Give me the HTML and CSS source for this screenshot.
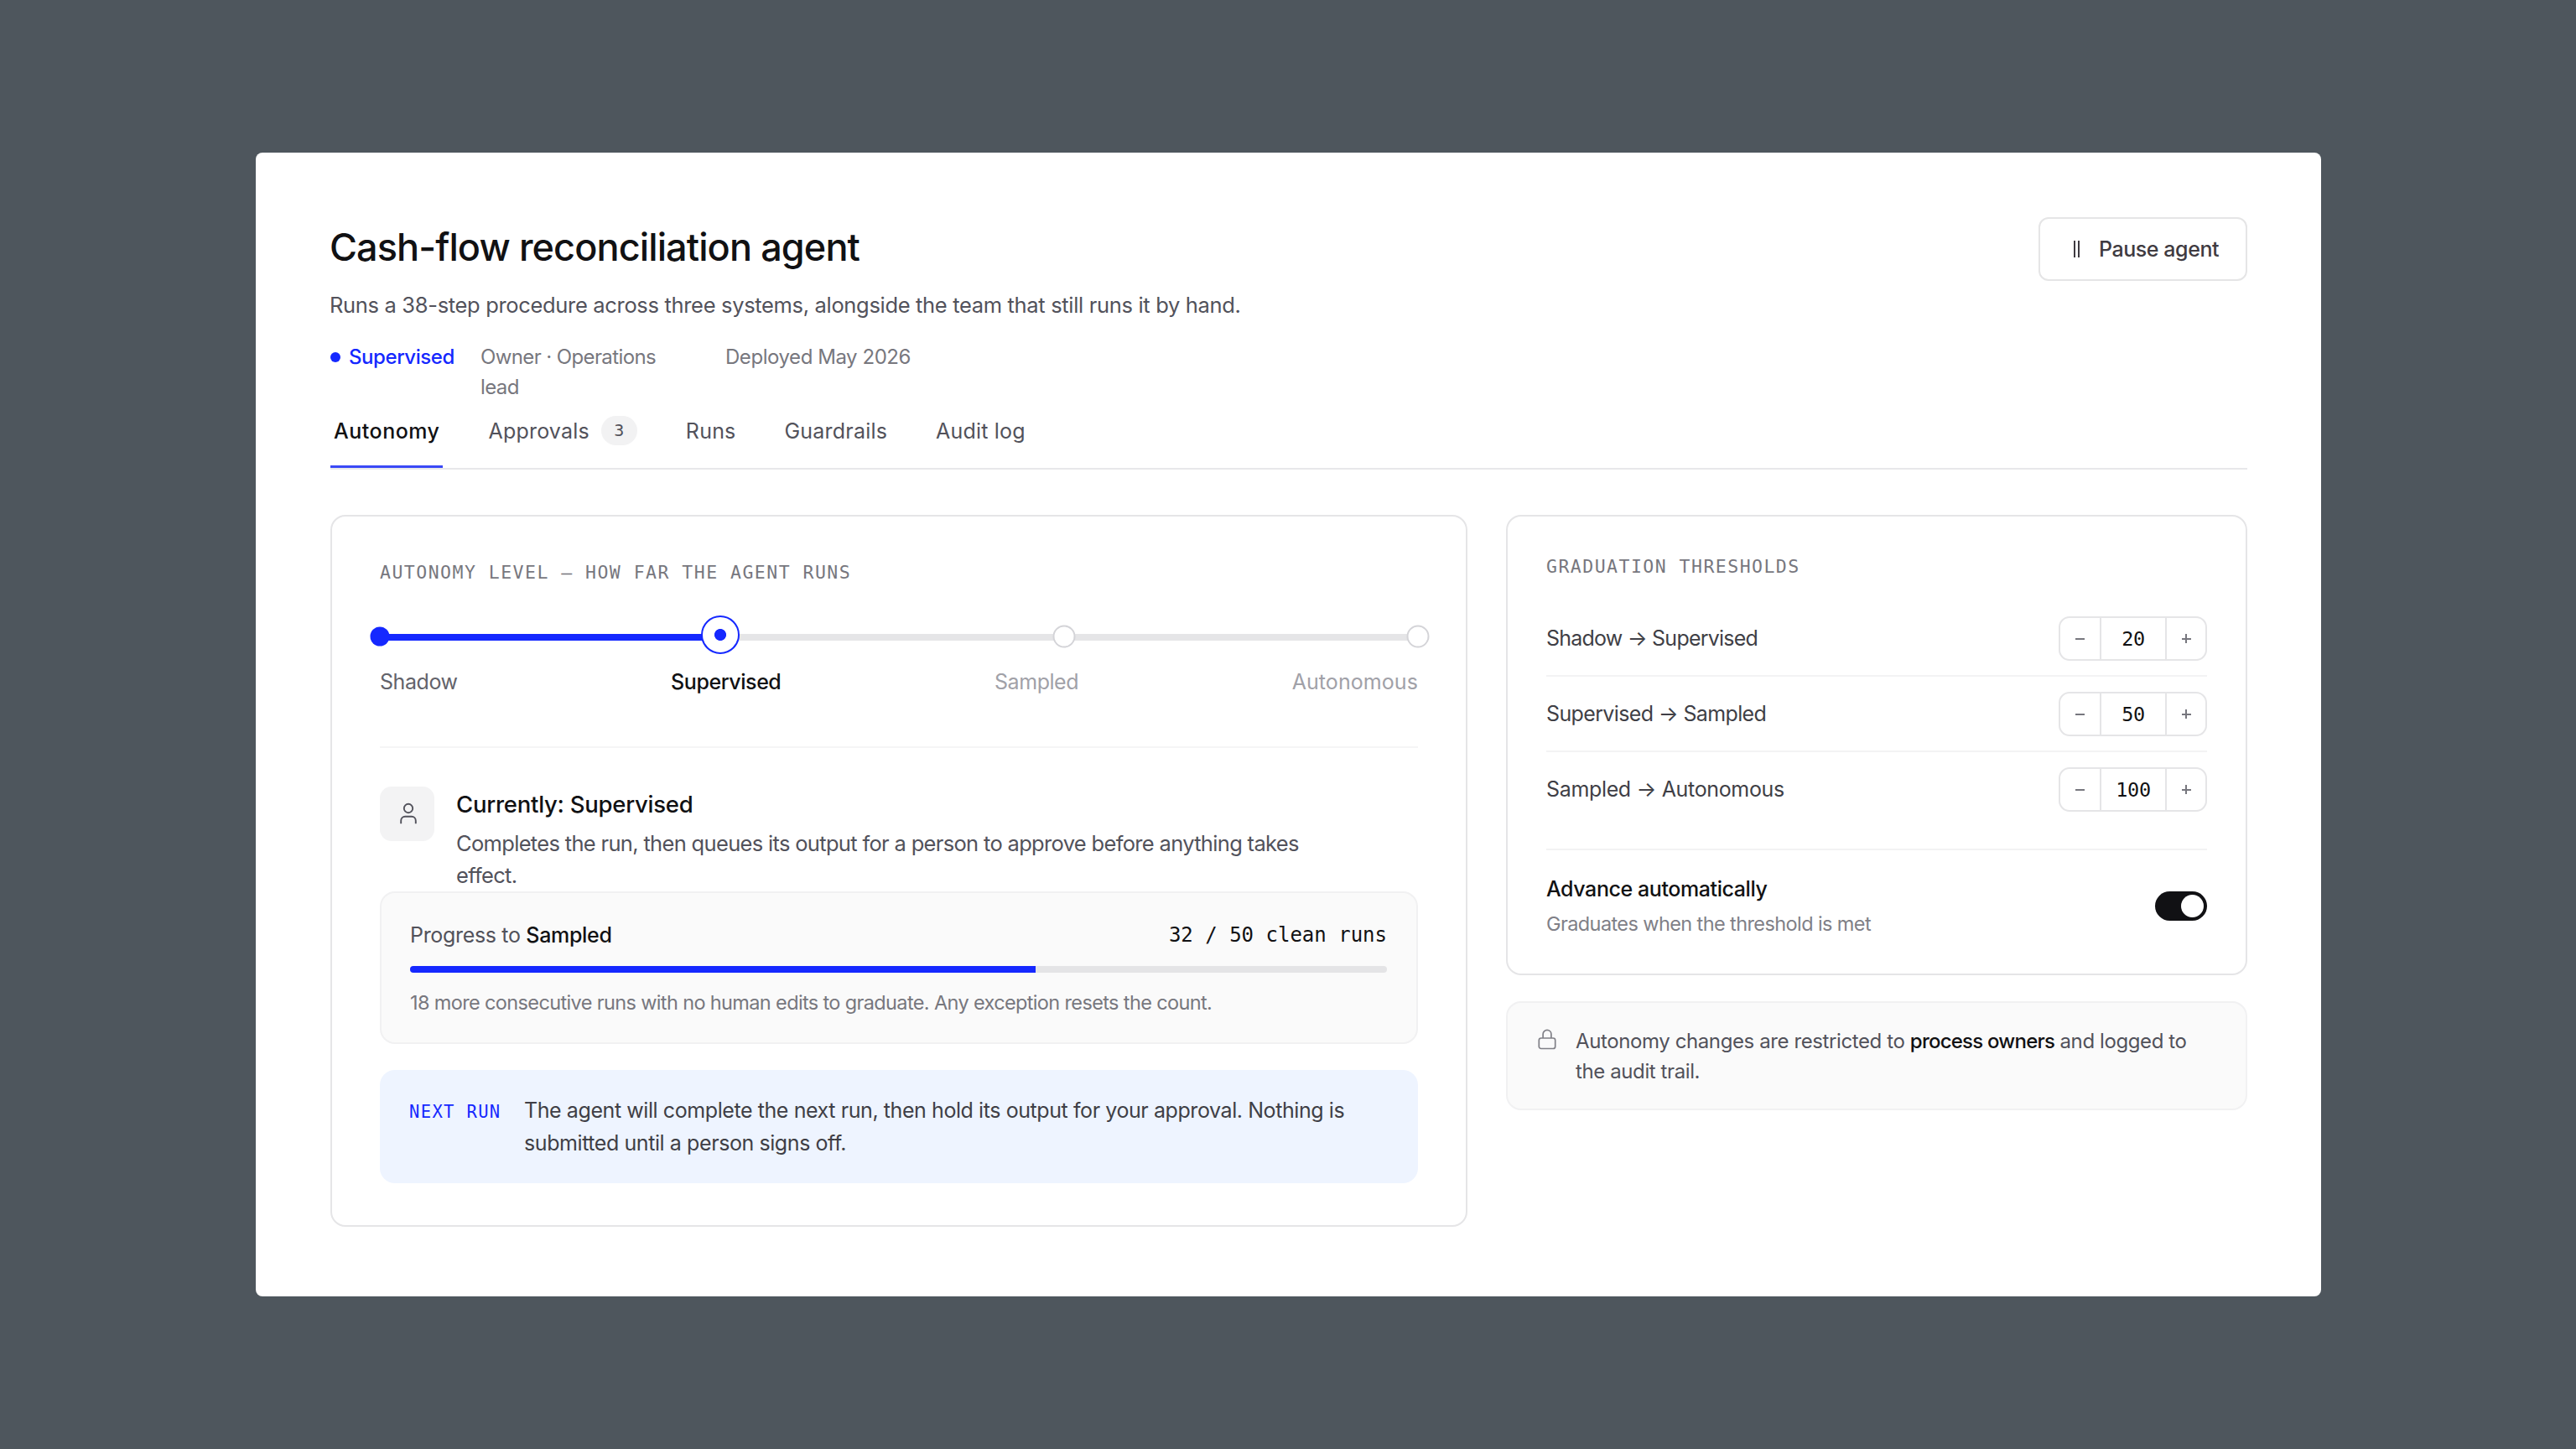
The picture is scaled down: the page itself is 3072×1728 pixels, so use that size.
FILE: index.html
```
<!DOCTYPE html>
<html lang="en">
<head>
  <meta charset="UTF-8">
  <title>Cash-flow reconciliation agent</title>
  <link rel="stylesheet" href="styles.css">
</head>
<body>

<main class="panel">
  <header class="header">
    <div>
      <h1>Cash-flow reconciliation agent</h1>
      <p class="subtitle">Runs a 38-step procedure across three systems, alongside the team that still runs it by hand.</p>
      <div class="meta">
        <span class="status">Supervised</span>
        <span class="owner">Owner · Operations lead</span>
        <span class="deployed">Deployed May 2026</span>
      </div>
    </div>
    <button type="button" class="pause">
      <svg width="8" height="20" viewBox="0 0 8 20" stroke="currentColor" stroke-width="2"><path d="M1 0v20M6 0v20"/></svg>
      Pause agent
    </button>
  </header>

  <nav class="tabs">
    <a class="tab active">Autonomy</a>
    <a class="tab">Approvals <span class="badge">3</span></a>
    <a class="tab">Runs</a>
    <a class="tab">Guardrails</a>
    <a class="tab">Audit log</a>
  </nav>

  <div class="columns">
    <section class="card level">
      <h2 class="label">AUTONOMY LEVEL — HOW FAR THE AGENT RUNS</h2>

      <div class="slider">
        <div class="track"><div class="track-fill"></div></div>
        <span class="node done"></span>
        <span class="node current"></span>
        <span class="node sampled"></span>
        <span class="node last"></span>
      </div>
      <div class="steps">
        <span class="passed">Shadow</span>
        <span class="now">Supervised</span>
        <span>Sampled</span>
        <span class="auto">Autonomous</span>
      </div>

      <div class="current-row">
        <div class="icon-box">
          <svg width="24" height="28" viewBox="0 0 24 28" fill="none" stroke="currentColor" stroke-width="1.9">
            <circle cx="12" cy="7" r="5.2"/>
            <path d="M3.2 25.3v-3.6a4.9 4.9 0 0 1 4.9-4.9h7.8a4.9 4.9 0 0 1 4.9 4.9v3.6"/>
          </svg>
        </div>
        <div>
          <h3>Currently: Supervised</h3>
          <p class="desc">Completes the run, then queues its output for a person to approve before anything takes effect.</p>
        </div>
      </div>

      <div class="progress">
        <div class="progress-head">
          <span>Progress to <b>Sampled</b></span>
          <span class="count">32 / 50 clean runs</span>
        </div>
        <div class="bar"><div class="bar-fill" style="width: 64%"></div></div>
        <p class="caption">18 more consecutive runs with no human edits to graduate. Any exception resets the count.</p>
      </div>

      <div class="next">
        <span class="next-label">NEXT RUN</span>
        <p>The agent will complete the next run, then hold its output for your approval. Nothing is submitted until a person signs off.</p>
      </div>
    </section>

    <aside>
      <section class="card thresholds">
        <h2 class="label">GRADUATION THRESHOLDS</h2>
        <div class="rows">
          <div class="row">
            <span class="tight">Shadow → Supervised</span>
            <div class="stepper"><button type="button" class="minus"></button><output>20</output><button type="button" class="plus"></button></div>
          </div>
          <div class="row">
            <span class="mid">Supervised → Sampled</span>
            <div class="stepper"><button type="button" class="minus"></button><output>50</output><button type="button" class="plus"></button></div>
          </div>
          <div class="row">
            <span>Sampled → Autonomous</span>
            <div class="stepper"><button type="button" class="minus"></button><output>100</output><button type="button" class="plus"></button></div>
          </div>
        </div>
        <div class="advance">
          <div>
            <h4>Advance automatically</h4>
            <p>Graduates when the threshold is met</p>
          </div>
          <div class="toggle"></div>
        </div>
      </section>

      <div class="note">
        <svg width="22" height="26" viewBox="0 0 22 26" fill="none" stroke="currentColor" stroke-width="1.7">
          <rect x="1.3" y="11" width="19.4" height="12.5" rx="2.5"/>
          <path d="M6.1 11V6.3a4.9 4.9 0 0 1 9.8 0V11"/>
        </svg>
        <p>Autonomy changes are restricted to <b>process owners</b> and logged to the audit trail.</p>
      </div>
    </aside>
  </div>
</main>

</body>
</html>
```

FILE: styles.css
```
* {
  box-sizing: border-box;
}

body {
  margin: 0;
  background: #4e565d;
  font-family: Inter, "Liberation Sans", sans-serif;
  font-size: 25px;
  line-height: 36px;
  color: #52525b;
}

h1, h2, h3, h4, p {
  margin: 0;
  font-weight: 500;
}

p {
  font-weight: 400;
}

b {
  font-weight: 500;
  color: #111113;
}

button {
  background: none;
  border: 0;
  padding: 0;
  font: inherit;
}

.panel {
  margin: 182px 304px 182px 305px;
  height: 1364px;
  padding: 76px 88px 0 89px;
  background: #fff;
  border-radius: 8px;
}

/* header */
.header {
  display: flex;
  justify-content: space-between;
  align-items: flex-start;
  height: 221px;
}

h1 {
  margin-left: -1px;
  font-size: 45px;
  line-height: 74px;
  letter-spacing: -0.0198em;
  color: #111113;
}

.subtitle {
  margin-top: 14px;
  margin-left: -1px;
  font-size: 25.5px;
  letter-spacing: -0.0129em;
}

.meta {
  display: flex;
  align-items: flex-start;
  gap: 32px;
  margin-top: 26px;
  font-size: 24px;
  line-height: 35.5px;
  color: #77777e;
}

.status {
  display: flex;
  align-items: center;
  gap: 10px;
  width: 147px;
  font-weight: 500;
  letter-spacing: -0.018em;
  color: #1528ff;
}

.status::before {
  content: "";
  flex: none;
  width: 12px;
  height: 12px;
  border-radius: 50%;
  background: #1528ff;
}

.owner {
  width: 240px;
  margin-right: 20px;
  letter-spacing: -0.0255em;
}

.deployed {
  letter-spacing: -0.0186em;
}

.pause {
  display: flex;
  align-items: center;
  gap: 22px;
  width: 249px;
  height: 76px;
  margin-top: 1px;
  padding-left: 40px;
  border: 2px solid #e5e5e6;
  border-radius: 12px;
  font-weight: 500;
  letter-spacing: -0.0176em;
  color: #3f3b41;
}

/* tabs */
.tabs {
  display: flex;
  gap: 50px;
  height: 81px;
  border-bottom: 2px solid #e8e8ea;
}

.tab {
  display: flex;
  align-items: center;
  padding: 0 4px 10px;
  letter-spacing: 0.008em;
}

.tab.active {
  padding-bottom: 7px;
  border-bottom: 3px solid #3a49f6;
  font-weight: 500;
  letter-spacing: 0.02em;
  color: #111113;
}

.badge {
  width: 43px;
  height: 35px;
  margin-left: 14px;
  border-radius: 18px;
  background: #f2f2f3;
  font: 20px/35px "DejaVu Sans Mono", monospace;
  letter-spacing: 0;
  text-align: center;
}

/* cards */
.columns {
  display: grid;
  grid-template-columns: 1356px 884px;
  justify-content: space-between;
  align-items: start;
  margin-top: 54px;
}

.card {
  border: 2px solid #e5e5e7;
  border-radius: 18px;
}

.label {
  font: 21.5px/30px "DejaVu Sans Mono", monospace;
  letter-spacing: 1.47px;
  color: #77777e;
}

.level {
  padding: 52px 57px 50px;
}

/* autonomy slider */
.slider {
  position: relative;
  display: flex;
  align-items: center;
  height: 46px;
  margin-top: 37px;
}

.track {
  width: 100%;
  height: 8px;
  margin-top: 4px;
  background: #e5e5e7;
}

.track-fill {
  width: 32.8%;
  height: 8px;
  background: #1528ff;
}

.node {
  position: absolute;
  top: 24px;
  width: 27px;
  height: 27px;
  border: 2px solid #d4d4d8;
  border-radius: 50%;
  background: #fff;
  transform: translate(-50%, -50%);
}

.node.done {
  left: 0;
  width: 23px;
  height: 23px;
  border: 0;
  background: #1528ff;
}

.node.current {
  left: 32.8%;
  top: 22px;
  width: 46px;
  height: 46px;
  border-color: #1528ff;
  background: radial-gradient(circle, #1528ff 6.6px, #fff 7.4px);
}

.node.sampled {
  left: 65.9%;
}

.node.last {
  left: 100%;
}

.steps {
  display: flex;
  justify-content: space-between;
  margin-top: 14px;
  padding-bottom: 59px;
  border-bottom: 2px solid #f5f5f6;
  letter-spacing: -0.0175em;
  color: #a1a1a8;
}

.passed {
  color: #63636b;
}

.now {
  font-weight: 500;
  color: #111113;
}

.auto {
  letter-spacing: 0.0027em;
}

.current-row {
  display: flex;
  gap: 26px;
  margin-top: 46px;
}

.icon-box {
  display: flex;
  flex: none;
  align-items: center;
  justify-content: center;
  width: 65px;
  height: 65px;
  padding-left: 2px;
  border-radius: 14px;
  background: #f3f3f4;
}

h3 {
  margin-top: 2px;
  font-size: 27.5px;
  line-height: 38px;
  letter-spacing: -0.009em;
  color: #111113;
}

.desc {
  width: 1060px;
  margin-top: 9px;
  margin-bottom: 1px;
  font-size: 25.5px;
  line-height: 37.5px;
  letter-spacing: -0.0264em;
}

.progress {
  height: 182px;
  padding: 32px 35px 0 34px;
  border: 2px solid #f1f1f2;
  border-radius: 18px;
  background: #fafafa;
}

.progress-head {
  display: flex;
  justify-content: space-between;
  letter-spacing: -0.013em;
}

.count {
  font: 24px/36px "DejaVu Sans Mono", monospace;
  letter-spacing: 0;
  color: #111113;
}

.bar {
  height: 8px;
  margin-top: 19px;
  border-radius: 4px;
  background: #e4e4e6;
  overflow: hidden;
}

.bar-fill {
  height: 100%;
  background: #1528ff;
}

.caption {
  margin-top: 19px;
  font-size: 23.5px;
  line-height: 34px;
  letter-spacing: -0.027em;
  color: #77777e;
}

.next {
  display: flex;
  height: 135px;
  margin-top: 31px;
  padding: 29px 40px 0 35px;
  border-radius: 18px;
  background: #eef4ff;
  line-height: 39px;
  letter-spacing: -0.0167em;
  color: #3f3f46;
}

.next-label {
  flex: none;
  width: 137px;
  font: 20.5px/42px "DejaVu Sans Mono", monospace;
  letter-spacing: 1.35px;
  color: #1528ff;
}

/* thresholds */
.thresholds {
  padding: 45px 46px 42px;
}

.rows {
  margin-top: 26px;
}

.row {
  display: flex;
  justify-content: space-between;
  align-items: center;
  height: 90px;
  border-bottom: 2px solid #f3f3f4;
  letter-spacing: -0.0137em;
  color: #3f3f46;
}

.row:last-child {
  border-color: transparent;
}

.tight {
  letter-spacing: -0.031em;
}

.mid {
  letter-spacing: -0.0253em;
}

.stepper {
  display: grid;
  grid-template-columns: 47px 80px 1fr;
  width: 177px;
  height: 53px;
  border: 2px solid #e5e5e7;
  border-radius: 13px;
}

.stepper output {
  border: solid #e5e5e7;
  border-width: 0 2px;
  font: 23.5px/50px "DejaVu Sans Mono", monospace;
  letter-spacing: -0.3px;
  text-align: center;
  color: #111113;
}

.minus, .plus {
  background: linear-gradient(#77777e, #77777e) center / 11px 2px no-repeat;
}

.plus {
  background: linear-gradient(#77777e, #77777e) center / 11px 2px no-repeat, linear-gradient(#77777e, #77777e) center / 2px 11px no-repeat;
}

.advance {
  display: flex;
  justify-content: space-between;
  align-items: center;
  margin-top: 25px;
  padding-top: 28px;
  border-top: 2px solid #f2f2f3;
}

h4 {
  letter-spacing: -0.0166em;
  color: #111113;
}

.advance p {
  margin-top: 7px;
  font-size: 23.5px;
  line-height: 34px;
  letter-spacing: -0.0254em;
  color: #808087;
}

.toggle {
  display: flex;
  justify-content: flex-end;
  width: 62px;
  height: 35px;
  padding: 4px;
  border-radius: 18px;
  background: #111114;
}

.toggle::after {
  content: "";
  width: 27px;
  height: 27px;
  border-radius: 50%;
  background: #fff;
}

.note {
  display: flex;
  gap: 23px;
  height: 130px;
  margin-top: 31px;
  padding: 28px 50px 0 36px;
  border: 2px solid #f1f1f2;
  border-radius: 18px;
  background: #fafafa;
  font-size: 24px;
  letter-spacing: -0.0165em;
}

.note b {
  letter-spacing: -0.032em;
}

.note svg {
  flex: none;
  margin-top: 3px;
  color: #808087;
}
```
